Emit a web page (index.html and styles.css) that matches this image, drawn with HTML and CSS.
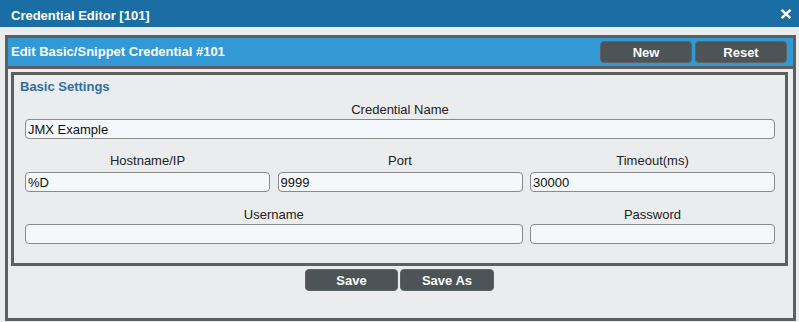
FILE: index.html
```html
<!DOCTYPE html>
<html lang="en">
<head>
    <meta charset="UTF-8">
    <title>Credential Editor [101]</title>
    <link rel="stylesheet" href="styles.css">
</head>
<body>
    <div class="titlebar">
        <span class="title">Credential Editor [101]</span>
        <svg class="close" width="12" height="10" viewBox="0 0 12 10">
            <path d="M1.5 0.8 L10.5 9.2 M10.5 0.8 L1.5 9.2" stroke="#fff" stroke-width="2.4"/>
        </svg>
    </div>

    <div class="frame">
        <div class="frame-head">
            <span class="head-title">Edit Basic/Snippet Credential #101</span>
            <div class="head-btns">
                <button class="btn">New</button>
                <button class="btn">Reset</button>
            </div>
        </div>

        <div class="settings">
            <div class="section-title">Basic Settings</div>

            <div class="row row-name">
                <label class="field span-3">
                    <span class="label">Credential Name</span>
                    <input type="text" value="JMX Example">
                </label>
            </div>

            <div class="row row-host">
                <label class="field">
                    <span class="label">Hostname/IP</span>
                    <input type="text" value="%D">
                </label>
                <label class="field">
                    <span class="label">Port</span>
                    <input type="text" value="9999">
                </label>
                <label class="field">
                    <span class="label">Timeout(ms)</span>
                    <input type="text" value="30000">
                </label>
            </div>

            <div class="row row-user">
                <label class="field span-2">
                    <span class="label">Username</span>
                    <input type="text" value="">
                </label>
                <label class="field">
                    <span class="label">Password</span>
                    <input type="password" value="">
                </label>
            </div>
        </div>

        <div class="save-btns">
            <button class="btn btn-save">Save</button>
            <button class="btn btn-saveas">Save As</button>
        </div>
    </div>
</body>
</html>
```

FILE: styles.css
```css
body {
    margin: 0;
    background-color: #ebecee;
    font-family: 'Liberation Sans', Arial, sans-serif;
    font-size: 13px;
    color: #222;
}
.titlebar {
    height: 27px;
    box-sizing: border-box;
    padding: 8px 7px 0 11px;
    background-color: #1a6ea3;
    color: #fff;
    display: flex;
    justify-content: space-between;
    align-items: flex-start;
}
.title {
    font-weight: bold;
    line-height: 16px;
}
.close {
    margin-top: 1px;
}
.frame {
    margin: 8px 3px 0 5px;
    height: 286px;
    box-sizing: border-box;
    border: 3px solid #5e5e5e;
}
.frame-head {
    height: 28px;
    padding: 0 6px 0 3px;
    background-color: #3399d5;
    border-bottom: 3px solid #5e5e5e;
    display: flex;
    justify-content: space-between;
    align-items: flex-start;
}
.head-title {
    color: #fff;
    font-weight: bold;
    line-height: 16px;
    padding-top: 6px;
}
.head-btns {
    display: flex;
    gap: 3px;
    padding-top: 3px;
}
.btn {
    width: 92px;
    height: 22px;
    padding: 0;
    border: 1px solid #5a6367;
    border-radius: 4px;
    background-color: #4c5457;
    color: #fff;
    font-family: 'Liberation Sans', Arial, sans-serif;
    font-size: 13px;
    font-weight: bold;
    cursor: pointer;
}
.btn-save { width: 93px; }
.btn-saveas { width: 94px; }
.settings {
    margin: 3px 5px 0 3px;
    height: 194px;
    box-sizing: border-box;
    border: 3px solid #5e5e5e;
    padding: 4px 10px 0 11px;
}
.section-title {
    color: #2d6fa3;
    font-weight: bold;
    line-height: 16px;
    padding-left: 6px;
    margin-left: -11px;
}
.row {
    display: grid;
    grid-template-columns: 245px 245px 245px;
    column-gap: 7.5px;
}
.row-name { margin-top: 7px; }
.row-host { margin-top: 14px; }
.row-user { margin-top: 15px; }
.field {
    display: flex;
    flex-direction: column;
    align-items: stretch;
}
.span-3 { grid-column: span 3; }
.span-2 { grid-column: span 2; }
.label {
    text-align: center;
    line-height: 16px;
    margin-bottom: 1px;
}
.row-host .label { margin-bottom: 3px; }
.field input {
    height: 20px;
    box-sizing: border-box;
    margin: 0;
    padding: 0 2px;
    border: 1px solid #8a8a8a;
    border-radius: 4px;
    background-color: #f5f8fa;
    font-family: 'Liberation Sans', Arial, sans-serif;
    font-size: 13px;
    color: #111;
}
.save-btns {
    display: flex;
    justify-content: center;
    gap: 2px;
    margin-top: 3px;
    padding-right: 2px;
}
```
